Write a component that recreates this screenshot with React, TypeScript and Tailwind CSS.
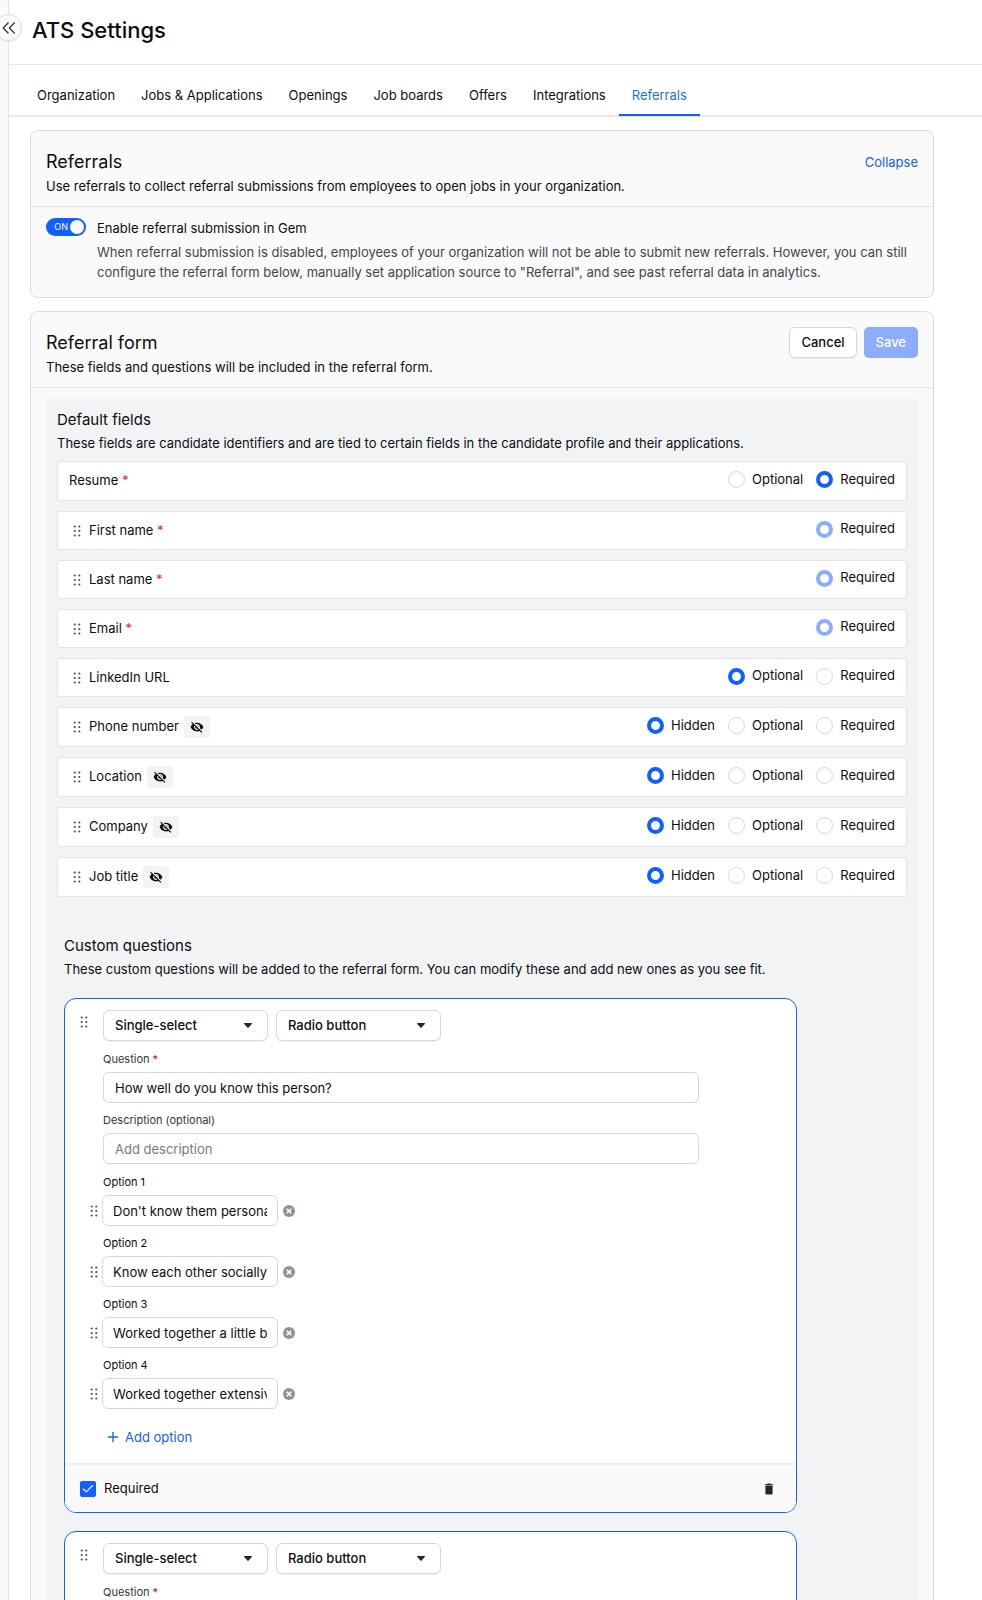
import { useId, useState } from "react";
import { Check, Plus } from "lucide-react";
import { MdVisibilityOff } from "react-icons/md";

type Visibility = "Hidden" | "Optional" | "Required";

type Field = {
  name: string;
  value: Visibility;
  choices: Visibility[];
  required?: boolean;
  fixed?: boolean;
  locked?: boolean;
};

const tabs = [
  "Organization",
  "Jobs & Applications",
  "Openings",
  "Job boards",
  "Offers",
  "Integrations",
  "Referrals",
];

const fields: Field[] = [
  { name: "Resume", value: "Required", choices: ["Optional", "Required"], required: true, fixed: true },
  { name: "First name", value: "Required", choices: ["Required"], required: true, locked: true },
  { name: "Last name", value: "Required", choices: ["Required"], required: true, locked: true },
  { name: "Email", value: "Required", choices: ["Required"], required: true, locked: true },
  { name: "LinkedIn URL", value: "Optional", choices: ["Optional", "Required"] },
  { name: "Phone number", value: "Hidden", choices: ["Hidden", "Optional", "Required"] },
  { name: "Location", value: "Hidden", choices: ["Hidden", "Optional", "Required"] },
  { name: "Company", value: "Hidden", choices: ["Hidden", "Optional", "Required"] },
  { name: "Job title", value: "Hidden", choices: ["Hidden", "Optional", "Required"] },
];

const firstOptions = [
  "Don't know them personally",
  "Know each other socially",
  "Worked together a little bit",
  "Worked together extensively",
];

function Grip({ className = "" }: { className?: string }) {
  return (
    <svg viewBox="0 0 8 12" className={`h-3 w-2 shrink-0 fill-[#4b4f5c] ${className}`} aria-hidden="true">
      {[1.5, 6, 10.5].map((y) => (
        <g key={y}>
          <circle cx="1.7" cy={y} r="1.1" />
          <circle cx="6.3" cy={y} r="1.1" />
        </g>
      ))}
    </svg>
  );
}

function CollapseIcon() {
  return (
    <svg viewBox="0 0 14 12" className="h-3 w-[14px] shrink-0" fill="none" stroke="#33363f" strokeWidth="1.3" aria-hidden="true">
      <path d="M6.5.5L1.200 6l5.300 5.500M12.700.500L7.400 6l5.300 5.500" />
    </svg>
  );
}

function TrashIcon() {
  return (
    <svg viewBox="0 0 8 12" className="h-3 w-2 fill-[#23262f]" aria-hidden="true">
      <path d="M2.4 0.4h3.2v0.8H8v1.2H0V1.2h2.4z" />
      <path d="M0.4 3h7.2v7.4c0 .7-.5 1.2-1.200 1.200H1.600C.9 11.600.4 11.100.4 10.400z" />
    </svg>
  );
}

function ClearIcon() {
  return (
    <svg viewBox="0 0 12 12" className="h-3 w-3" aria-hidden="true">
      <circle cx="6" cy="6" r="6" fill="#8f9298" />
      <path d="M4.200 4.200l3.600 3.600M7.800 4.200l-3.600 3.600" stroke="#fff" strokeWidth="1.6" strokeLinecap="round" />
    </svg>
  );
}

function FieldRow({ field }: { field: Field }) {
  const [value, setValue] = useState<Visibility>(field.value);
  const name = useId();

  return (
    <li
      className={`flex items-center justify-between rounded-[3px] border border-[#e3e5ea] bg-white px-[11px] ${
        value === "Hidden" || field.fixed ? "h-10" : "h-[39px]"
      }`}
    >
      <div className="flex items-center text-[13px]">
        {!field.fixed && <Grip className="ml-1 mr-2" />}
        <span className="whitespace-pre">
          {field.name}
          {field.required && <span className="text-[#d92d3a]"> *</span>}
        </span>
        {value === "Hidden" && (
          <span className="ml-[5px] flex h-[22px] w-[26px] items-center justify-center rounded-[3px] bg-[#f2f3f5]">
            <MdVisibilityOff className="h-3.5 w-3.5" />
          </span>
        )}
      </div>
      <div role="radiogroup" aria-label={field.name} className="flex gap-[13px] pb-[3px]">
        {field.choices.map((choice) => (
          <label key={choice} className="flex items-center gap-[7px] text-[13px]">
            <input
              type="radio"
              name={name}
              checked={value === choice}
              disabled={field.locked}
              onChange={() => setValue(choice)}
              className="h-[17px] w-[17px] appearance-none rounded-full border border-[#d5d7dd] bg-white checked:border-4 checked:border-[#1260fb] disabled:checked:border-[#8cadfd]"
            />
            {choice}
          </label>
        ))}
      </div>
    </li>
  );
}

function Dropdown({ label, options }: { label: string; options: string[] }) {
  return (
    <div className="relative">
      <select
        aria-label={label}
        className="h-[31px] w-[165px] appearance-none rounded-md border border-[#d5d7e0] bg-white pl-[11px] text-[13px] font-[450] shadow-[0_1px_1px_rgba(0,0,0,0.06)]"
      >
        {options.map((option) => (
          <option key={option}>{option}</option>
        ))}
      </select>
      <svg viewBox="0 0 8 5" className="pointer-events-none absolute right-4 top-[13px] h-[5px] w-2 fill-[#23262f]">
        <path d="M0.600 0h6.800c.5 0 .7.600.4.900L4.600 4.600c-.3.300-.9.300-1.200 0L.2.900C-.1.600.1 0 .6 0z" />
      </svg>
    </div>
  );
}

function QuestionCard({ question, initialOptions }: { question: string; initialOptions: string[] }) {
  const id = useId();
  const [options, setOptions] = useState(initialOptions);

  return (
    <article className="w-full max-w-[733px] overflow-hidden rounded-xl border border-[#1260fb] bg-white">
      <div className="px-[15px] pt-[11px] pb-4">
        <div className="flex">
          <Grip className="mr-[15px] mt-[6px]" />
          <div className="flex gap-2">
            <Dropdown label="Question type" options={["Single-select"]} />
            <Dropdown label="Display as" options={["Radio button"]} />
          </div>
        </div>

        <div className="flex max-w-[619px] flex-col gap-[9px] pl-[23px] pt-[10px]">
          <div>
            <label htmlFor={`${id}-q`} className="block h-[21px] whitespace-pre text-[11px] leading-4 text-[#33363f]">
              Question
              <span className="text-[#a1202c]"> *</span>
            </label>
            <input
              id={`${id}-q`}
              defaultValue={question}
              className="block h-[31px] w-full rounded-md border border-[#d5d7e0] px-[11px] text-[13px]"
            />
          </div>
          <div>
            <label htmlFor={`${id}-d`} className="block h-[21px] text-[11px] leading-4 text-[#33363f]">
              Description (optional)
            </label>
            <input
              id={`${id}-d`}
              placeholder="Add description"
              className="block h-[31px] w-full rounded-md border border-[#d5d7e0] px-[11px] text-[13px] placeholder:text-[#757986]"
            />
          </div>
        </div>

        <ul className="flex flex-col gap-[9px] pt-[10px]">
          {options.map((option, i) => (
            <li key={option}>
              <label htmlFor={`${id}-${i}`} className="block h-[21px] pl-[23px] text-[11px] leading-4">
                Option {i + 1}
              </label>
              <div className="flex items-center pl-[10px]">
                <Grip className="mr-1" />
                <input
                  id={`${id}-${i}`}
                  defaultValue={option}
                  className="h-[31px] w-[176px] rounded-md border border-[#d5d7e0] px-[10px] text-[13px]"
                />
                <button
                  type="button"
                  aria-label={`Remove option ${i + 1}`}
                  className="ml-[5px]"
                  onClick={() => setOptions(options.filter((o) => o !== option))}
                >
                  <ClearIcon />
                </button>
              </div>
            </li>
          ))}
        </ul>

        <button type="button" className="ml-[25px] mt-[18px] flex items-center gap-1 text-[13px] leading-5 text-[#1260fb]">
          <Plus className="h-4 w-4" strokeWidth={2} />
          Add option
        </button>
      </div>

      <footer className="flex h-[49px] items-center justify-between border-t-2 border-[#eeeff3] bg-[#fafafa] pl-[15px] pr-[23px]">
        <label className="flex items-center text-[13px]">
          <span className="mr-2 grid">
            <input
              type="checkbox"
              defaultChecked
              className="peer col-start-1 row-start-1 h-4 w-4 appearance-none rounded-[2px] border border-[#d5d7e0] checked:border-[#1260fb] checked:bg-[#1260fb]"
            />
            <Check
              className="invisible col-start-1 row-start-1 h-[14px] w-[14px] self-center justify-self-center text-white peer-checked:visible"
              strokeWidth={2}
            />
          </span>
          Required
        </label>
        <button type="button" aria-label="Delete question">
          <TrashIcon />
        </button>
      </footer>
    </article>
  );
}

export default function App() {
  const [activeTab, setActiveTab] = useState("Referrals");

  return (
    <div className="flex h-screen overflow-hidden bg-white font-[Inter,sans-serif] text-[#0c0d10]">
      <aside className="relative w-[9px] shrink-0 border-r border-[#e3e5ea] bg-[#fafafa]">
        <button
          type="button"
          aria-label="Expand sidebar"
          className="absolute -left-[5px] top-[14px] flex h-[27px] w-[27px] items-center justify-center rounded-full border border-[#dcdee5] bg-[#fafafa] shadow-[0_1px_1px_rgba(0,0,0,0.08)]"
        >
          <CollapseIcon />
        </button>
      </aside>

      <main className="min-w-0 flex-1">
        <header className="border-b border-[#e3e5ea] px-[23px] pb-[19px] pt-[15px]">
          <h1 className="text-[22px] font-[450] leading-[30px]">ATS Settings</h1>
        </header>

        <nav className="flex border-b-2 border-[#e8e9ec] pl-[15px] pt-[14px]">
          {tabs.map((tab) => (
            <a
              key={tab}
              href={`#${tab}`}
              onClick={() => setActiveTab(tab)}
              className={`-mb-px whitespace-nowrap border-b-2 px-[13px] pb-[9px] pt-[6px] text-[13px] leading-5 ${
                tab === activeTab ? "border-[#1260fb] text-[#1f6feb]" : "border-transparent"
              }`}
            >
              {tab}
            </a>
          ))}
        </nav>

        <div className="flex flex-col gap-[13px] pl-[21px] pr-[48px] pt-[13px]">
          <section className="rounded-lg border border-[#d9dbe3] bg-[#fafafa]">
            <div className="flex items-start justify-between border-b border-[#e3e5ea] px-[15px] pb-[10px] pt-[19px]">
              <div>
                <h2 className="text-[18px] leading-6">Referrals</h2>
                <p className="mt-[2px] text-[13px] leading-5">
                  Use referrals to collect referral submissions from employees to open jobs in your organization.
                </p>
              </div>
              <button type="button" className="mt-[2px] text-[13px] leading-5 text-[#1260fb]">
                Collapse
              </button>
            </div>
            <div className="flex px-[15px] pb-[15px] pt-[11px]">
              <label className="mr-[11px] flex h-[18px] w-10 shrink-0 cursor-pointer items-center justify-end rounded-full bg-[#1260fb] pr-[2px] text-[9px] text-white">
                <input type="checkbox" role="switch" defaultChecked aria-label="Enable referral submission in Gem" className="sr-only" />
                ON
                <span className="ml-[2px] h-[14px] w-[14px] rounded-full bg-[#fafafa]" />
              </label>
              <div className="text-[13px] leading-5">
                <h3>Enable referral submission in Gem</h3>
                <p className="mt-1 text-[#42454e]">
                  When referral submission is disabled, employees of your organization will not be able to submit new
                  referrals. However, you can still configure the referral form below, manually set application source to
                  "Referral", and see past referral data in analytics.
                </p>
              </div>
            </div>
          </section>

          <section className="rounded-lg border border-[#d9dbe3] bg-[#fafafa]">
            <div className="flex items-start justify-between border-b border-[#e3e5ea] px-[15px] pb-[10px] pt-[15px]">
              <div className="pt-1">
                <h2 className="text-[18px] leading-6">Referral form</h2>
                <p className="mt-[2px] text-[13px] leading-5">
                  These fields and questions will be included in the referral form.
                </p>
              </div>
              <div className="flex gap-[7px] text-[13px] font-[450]">
                <button
                  type="button"
                  className="h-[31px] rounded-md border border-[#d5d7e0] bg-white px-[11px] shadow-[0_1px_1px_rgba(0,0,0,0.06)]"
                >
                  Cancel
                </button>
                <button type="button" disabled className="h-[31px] rounded-[5px] bg-[#8cadfd] px-3 text-white">
                  Save
                </button>
              </div>
            </div>

            <div className="mx-[15px] mb-4 mt-[11px] rounded bg-[#f2f3f5] pb-6 pt-[11px]">
              <div className="px-[11px]">
                <h3 className="text-[15px] leading-5">Default fields</h3>
                <p className="mt-[3px] text-[13px] leading-5">
                  These fields are candidate identifiers and are tied to certain fields in the candidate profile and
                  their applications.
                </p>
                <ul className="mt-2 flex flex-col gap-[10px]">
                  {fields.map((field) => (
                    <FieldRow key={field.name} field={field} />
                  ))}
                </ul>
              </div>

              <div className="px-[18px] pt-[39px]">
                <h3 className="text-[15px] leading-5">Custom questions</h3>
                <p className="mt-[3px] text-[13px] leading-5">
                  These custom questions will be added to the referral form. You can modify these and add new ones as
                  you see fit.
                </p>
                <div className="mt-[19px] flex flex-col gap-[18px]">
                  <QuestionCard question="How well do you know this person?" initialOptions={firstOptions} />
                  <QuestionCard question="" initialOptions={[]} />
                </div>
              </div>
            </div>
          </section>
        </div>
      </main>
    </div>
  );
}
